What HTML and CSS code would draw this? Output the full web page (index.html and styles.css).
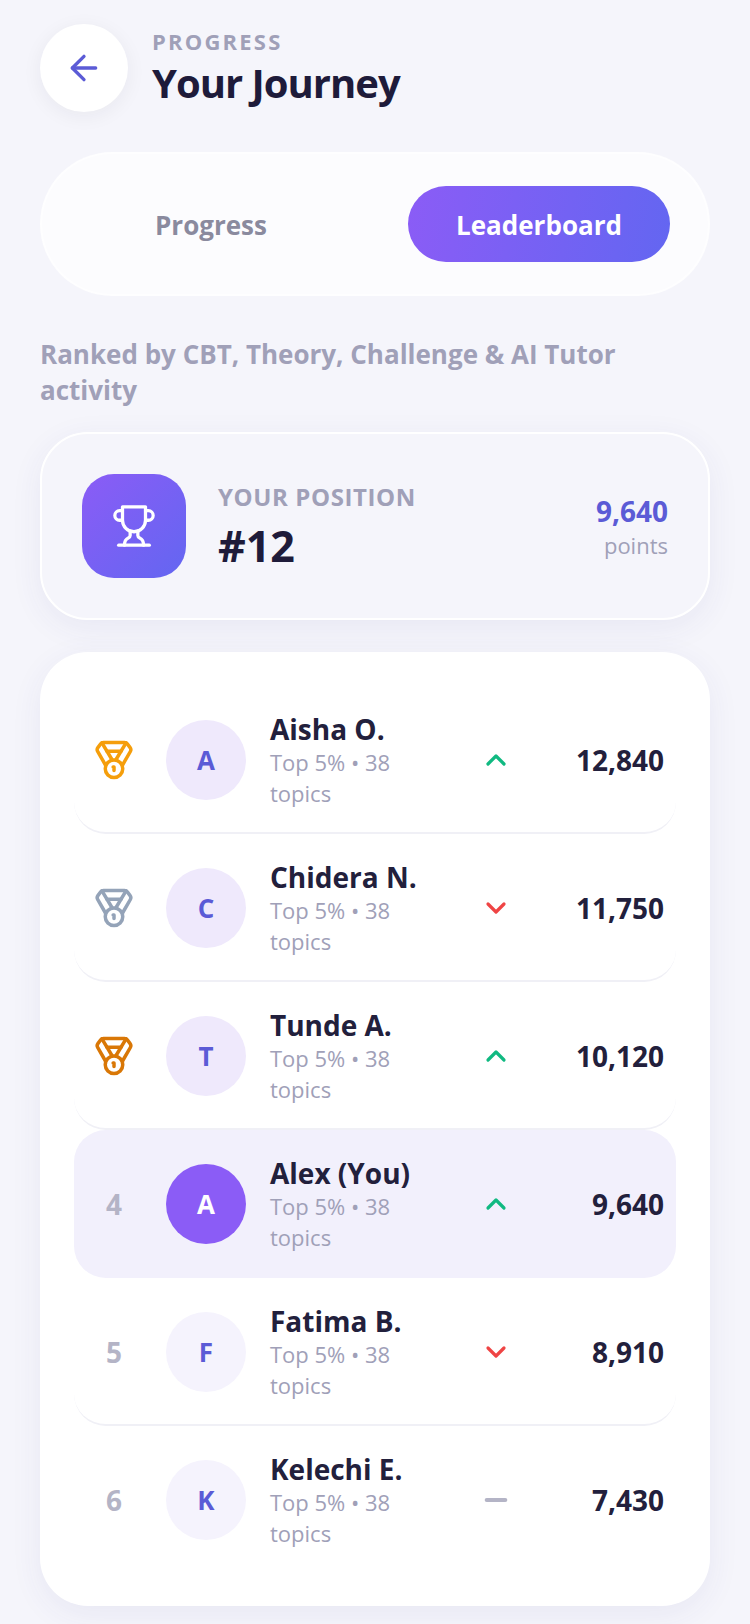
FILE: index.html
```html
<!DOCTYPE html>
<html lang="en">
<head>
    <meta charset="UTF-8">
    <meta name="viewport" content="width=device-width, initial-scale=1.0">
    <title>Your Journey</title>
    <link rel="stylesheet" href="styles.css">
</head>
<body>
    <svg class="icon-defs" aria-hidden="true">
        <symbol id="medal" viewBox="0 0 24 24">
            <path d="M7.21 15 2.66 7.14a2 2 0 0 1 .13-2.2L4.4 2.8A2 2 0 0 1 6 2h12a2 2 0 0 1 1.6.8l1.6 2.14a2 2 0 0 1 .14 2.2L16.79 15"/>
            <path d="M11 12 5.12 2.2"/>
            <path d="m13 12 5.88-9.8"/>
            <path d="M8 7h8"/>
            <circle cx="12" cy="17" r="5"/>
            <path d="M12 18v-2h-.5"/>
        </symbol>
        <symbol id="up" viewBox="0 0 24 24"><path d="m18 15-6-6-6 6"/></symbol>
        <symbol id="down" viewBox="0 0 24 24"><path d="m6 9 6 6 6-6"/></symbol>
        <symbol id="flat" viewBox="0 0 24 24"><path d="M5 12h14"/></symbol>
    </svg>

    <div class="container">
        <header class="header">
            <button class="back-button" aria-label="Back">
                <svg class="icon" viewBox="0 0 24 24"><path d="m12 19-7-7 7-7"/><path d="M19 12H5"/></svg>
            </button>
            <div class="header-text">
                <div class="eyebrow">PROGRESS</div>
                <h1 class="title">Your Journey</h1>
            </div>
        </header>

        <div class="tabs">
            <button class="tab">Progress</button>
            <button class="tab tab-active">Leaderboard</button>
        </div>

        <p class="note">Ranked by CBT, Theory, Challenge &amp; AI Tutor activity</p>

        <section class="position-card">
            <div class="position-icon">
                <svg class="icon" viewBox="0 0 24 24">
                    <path d="M6 9H4.5a2.5 2.5 0 0 1 0-5H6"/>
                    <path d="M18 9h1.5a2.5 2.5 0 0 0 0-5H18"/>
                    <path d="M4 22h16"/>
                    <path d="M10 14.66V17c0 .55-.47.98-.97 1.21C7.85 18.75 7 20.24 7 22"/>
                    <path d="M14 14.66V17c0 .55.47.98.97 1.21C16.15 18.75 17 20.24 17 22"/>
                    <path d="M18 2H6v7a6 6 0 0 0 12 0V2Z"/>
                </svg>
            </div>
            <div class="position-text">
                <div class="position-label">YOUR POSITION</div>
                <div class="position-rank">#12</div>
            </div>
            <div class="position-points">
                <div class="points-value">9,640</div>
                <div class="points-label">points</div>
            </div>
        </section>

        <section class="board">
            <div class="row">
                <div class="rank"><svg class="medal medal-gold"><use href="#medal"/></svg></div>
                <div class="avatar avatar-top">A</div>
                <div class="info">
                    <div class="name">Aisha O.</div>
                    <div class="meta">Top 5% • 38 topics</div>
                </div>
                <svg class="trend trend-up"><use href="#up"/></svg>
                <div class="score">12,840</div>
            </div>
            <div class="row">
                <div class="rank"><svg class="medal medal-silver"><use href="#medal"/></svg></div>
                <div class="avatar avatar-top">C</div>
                <div class="info">
                    <div class="name">Chidera N.</div>
                    <div class="meta">Top 5% • 38 topics</div>
                </div>
                <svg class="trend trend-down"><use href="#down"/></svg>
                <div class="score">11,750</div>
            </div>
            <div class="row">
                <div class="rank"><svg class="medal medal-bronze"><use href="#medal"/></svg></div>
                <div class="avatar avatar-top">T</div>
                <div class="info">
                    <div class="name">Tunde A.</div>
                    <div class="meta">Top 5% • 38 topics</div>
                </div>
                <svg class="trend trend-up"><use href="#up"/></svg>
                <div class="score">10,120</div>
            </div>
            <div class="row row-you">
                <div class="rank">4</div>
                <div class="avatar avatar-you">A</div>
                <div class="info">
                    <div class="name">Alex (You)</div>
                    <div class="meta">Top 5% • 38 topics</div>
                </div>
                <svg class="trend trend-up"><use href="#up"/></svg>
                <div class="score">9,640</div>
            </div>
            <div class="row">
                <div class="rank">5</div>
                <div class="avatar">F</div>
                <div class="info">
                    <div class="name">Fatima B.</div>
                    <div class="meta">Top 5% • 38 topics</div>
                </div>
                <svg class="trend trend-down"><use href="#down"/></svg>
                <div class="score">8,910</div>
            </div>
            <div class="row row-last">
                <div class="rank">6</div>
                <div class="avatar">K</div>
                <div class="info">
                    <div class="name">Kelechi E.</div>
                    <div class="meta">Top 5% • 38 topics</div>
                </div>
                <svg class="trend trend-flat"><use href="#flat"/></svg>
                <div class="score">7,430</div>
            </div>
        </section>
    </div>
</body>
</html>
```

FILE: styles.css
```css
* {
    box-sizing: border-box;
}

body {
    font-family: 'Open Sans', sans-serif;
    background-color: #f5f5fb;
    color: #1e1b3a;
    margin: 0;
}

.icon-defs {
    display: none;
}

.container {
    display: flex;
    flex-direction: column;
    padding: 24px 40px 18px;
}

.icon,
.medal,
.trend {
    fill: none;
    stroke: currentColor;
    stroke-linecap: round;
    stroke-linejoin: round;
    stroke-width: 2;
}

/* Header */
.header {
    display: flex;
    align-items: center;
    gap: 24px;
}

.back-button {
    display: flex;
    justify-content: center;
    align-items: center;
    width: 88px;
    height: 88px;
    padding: 0;
    border: none;
    border-radius: 50%;
    background-color: #fff;
    color: #5b5bd6;
    box-shadow: 0 4px 20px rgba(30, 27, 58, 0.06);
}

.back-button .icon {
    width: 40px;
    height: 40px;
}

.eyebrow {
    font-size: 22px;
    font-weight: 700;
    line-height: 28px;
    letter-spacing: 2.2px;
    color: #a0a0b8;
}

.title {
    margin: 2px 0 0;
    font-size: 40px;
    font-weight: 700;
    line-height: 52px;
    letter-spacing: -1px;
}

/* Tabs */
.tabs {
    display: flex;
    justify-content: space-between;
    margin-top: 40px;
    padding: 32px 38px;
    border: 2px solid rgba(255, 255, 255, 0.6);
    border-radius: 72px;
    background-color: rgba(255, 255, 255, 0.7);
}

.tab {
    width: 262px;
    height: 76px;
    padding-top: 2px;
    border: none;
    border-radius: 38px;
    background: none;
    font-family: inherit;
    font-size: 26px;
    font-weight: 700;
    color: #8a8a9e;
}

.tab-active {
    background: linear-gradient(100deg, #8b5cf6, #6366f1);
    color: #fff;
}

.note {
    margin: 40px 0 24px;
    padding-right: 40px;
    font-size: 26px;
    font-weight: 700;
    line-height: 36px;
    color: #a0a0b8;
}

/* Your position */
.position-card {
    display: flex;
    align-items: center;
    height: 188px;
    padding: 0 40px;
    border: 2px solid #fff;
    border-radius: 48px;
    box-shadow: 0 8px 32px rgba(60, 50, 140, 0.07);
}

.position-icon {
    display: flex;
    justify-content: center;
    align-items: center;
    flex-shrink: 0;
    width: 104px;
    height: 104px;
    border-radius: 32px;
    background: linear-gradient(135deg, #8b5cf6, #6366f1);
    color: #fff;
}

.position-icon .icon {
    width: 46px;
    height: 46px;
    stroke-width: 1.7;
}

.position-text {
    flex: 1;
    margin-left: 32px;
    padding-top: 4px;
}

.position-label {
    font-size: 24px;
    font-weight: 700;
    line-height: 32px;
    letter-spacing: 0.6px;
    color: #a0a0b8;
}

.position-rank {
    margin-top: 3px;
    font-size: 43px;
    font-weight: 700;
    line-height: 60px;
}

.position-points {
    padding-top: 2px;
    text-align: right;
}

.points-value {
    font-size: 28px;
    font-weight: 700;
    line-height: 36px;
    color: #5b5bd6;
}

.points-label {
    font-size: 22px;
    line-height: 32px;
    color: #a0a0b8;
}

/* Leaderboard */
.board {
    margin-top: 32px;
    padding: 34px 34px 32px;
    border-radius: 48px;
    background-color: #fff;
    box-shadow: 0 8px 32px rgba(60, 50, 140, 0.07);
}

.row {
    display: flex;
    align-items: center;
    gap: 24px;
    height: 148px;
    padding: 0 12px;
    border-top: 2px solid transparent;
    border-bottom: 2px solid #f0f0f6;
    border-radius: 32px;
}

.row-you {
    border-bottom-color: transparent;
    background-color: #f2f0fc;
}

.row-last {
    border-bottom-color: transparent;
}

.rank {
    display: flex;
    justify-content: center;
    align-items: center;
    flex-shrink: 0;
    width: 56px;
    font-size: 28px;
    font-weight: 700;
    color: #b4b4c6;
}

.medal {
    width: 42px;
    height: 42px;
}

.medal-gold {
    color: #f59e0b;
}

.medal-silver {
    color: #94a3b8;
}

.medal-bronze {
    color: #d97706;
}

.avatar {
    display: flex;
    justify-content: center;
    align-items: center;
    flex-shrink: 0;
    width: 80px;
    height: 80px;
    border-radius: 50%;
    background-color: #f5f3fd;
    font-size: 26px;
    font-weight: 700;
    color: #5b5bd6;
}

.avatar-top {
    background-color: #efe9fc;
}

.avatar-you {
    background-color: #8b5cf6;
    color: #fff;
}

.info {
    flex: 1;
    min-width: 0;
    color: #22203c;
}

.name {
    font-size: 28px;
    font-weight: 700;
    line-height: 36px;
}

.meta {
    font-size: 22px;
    line-height: 31px;
    color: #a0a0b8;
}

.trend {
    flex-shrink: 0;
    width: 32px;
    height: 32px;
    stroke-width: 2.4;
}

.trend-up {
    color: #10b981;
}

.trend-down {
    color: #ef4444;
}

.trend-flat {
    color: #b4b4c6;
    stroke-width: 3;
}

.score {
    flex-shrink: 0;
    width: 128px;
    font-size: 28px;
    font-weight: 700;
    color: #22203c;
    text-align: right;
}
```
